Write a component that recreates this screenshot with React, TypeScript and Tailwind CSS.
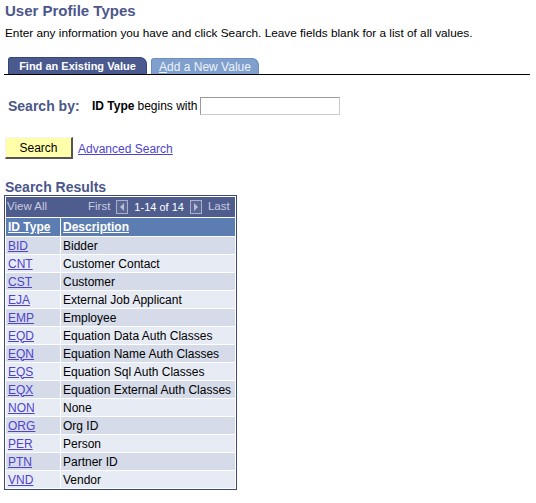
const rows: [string, string][] = [
  ["BID", "Bidder"],
  ["CNT", "Customer Contact"],
  ["CST", "Customer"],
  ["EJA", "External Job Applicant"],
  ["EMP", "Employee"],
  ["EQD", "Equation Data Auth Classes"],
  ["EQN", "Equation Name Auth Classes"],
  ["EQS", "Equation Sql Auth Classes"],
  ["EQX", "Equation External Auth Classes"],
  ["NON", "None"],
  ["ORG", "Org ID"],
  ["PER", "Person"],
  ["PTN", "Partner ID"],
  ["VND", "Vendor"],
];

function NavButton({ dir }: { dir: "left" | "right" }) {
  return (
    <span className="inline-flex h-[14px] w-[12px] shrink-0 items-center justify-center border border-[#a9b0c8] bg-[#5a6796]">
      <svg width="6" height="8" viewBox="0 0 6 8">
        {dir === "left" ? (
          <polygon points="5,0 5,8 1,4" fill="#b8bed3" />
        ) : (
          <polygon points="1,0 1,8 5,4" fill="#b8bed3" />
        )}
      </svg>
    </span>
  );
}

export default function App() {
  return (
    <div className="h-[503px] w-[536px] bg-white font-['Liberation_Sans',Arial,sans-serif] text-black">
      <div className="pl-[5px] pt-[1px] text-[15px] font-bold leading-[20px] text-[#4b568b]">
        User Profile Types
      </div>
      <div className="mt-[5px] pl-[5px] text-[11.8px] leading-[14px]">
        Enter any information you have and click Search. Leave fields blank for a list of all values.
      </div>

      {/* tabs */}
      <div className="ml-[4px] mr-[6px] mt-[17px] flex items-end gap-[4px] border-b border-black pl-[4px]">
        <div className="flex h-[17px] w-[139px] items-center justify-center rounded-tl-[3px] rounded-tr-[7px] border border-b-0 border-[#36447a] bg-[#4a5a8e] text-[11px] font-bold text-white">
          Find an Existing Value
        </div>
        <div className="flex h-[16px] w-[108px] items-center justify-center rounded-tl-[3px] rounded-tr-[7px] border border-b-0 border-[#6d8cbf] bg-[#7f9fcd] text-[12px] text-[#eef2fa]">
          <span>
            <span className="underline">A</span>dd a New Value
          </span>
        </div>
      </div>

      {/* search by */}
      <div className="mt-[22px] flex h-[18px] items-center pl-[8px]">
        <span className="w-[84px] text-[14px] font-bold text-[#4b568b]">Search by:</span>
        <span className="text-[12px] font-bold">ID Type</span>
        <span className="ml-[3px] text-[12px]">begins with</span>
        <input
          className="ml-[2px] h-[18px] w-[140px] border border-t-[#999] border-l-[#999] border-r-[#ccc] border-b-[#ccc] bg-white outline-none"
          type="text"
        />
      </div>

      <div className="mt-[22px] flex items-end pl-[5px]">
        <button className="h-[22px] w-[68px] border border-t-[#f4f4f4] border-l-[#f4f4f4] border-r-[#555] border-b-[#555] border-r-2 border-b-2 bg-[#ffffaa] text-[12px] text-black">
          Search
        </button>
        <a className="mb-[1px] ml-[5px] text-[12px] text-[#4f43cc] underline" href="#">
          Advanced Search
        </a>
      </div>

      <div className="mt-[20px] pl-[5px] text-[14px] font-bold leading-[16px] text-[#4b568b]">
        Search Results
      </div>

      {/* grid */}
      <div className="ml-[4px] w-[233px] border border-[#3b4a7e] bg-white p-px">
        <div className="flex h-[20px] items-center overflow-hidden whitespace-nowrap bg-[#4e5c8e] text-[11.5px] text-[#c9cde0]">
          <span className="w-[82px] shrink-0 pl-[1px]">View All</span>
          <span className="shrink-0">First</span>
          <span className="ml-[6px] flex shrink-0">
            <NavButton dir="left" />
          </span>
          <span className="ml-[6px] shrink-0 text-[11px] text-white">1-14 of 14</span>
          <span className="ml-[6px] flex shrink-0">
            <NavButton dir="right" />
          </span>
          <span className="ml-[6px] shrink-0">Last</span>
        </div>
        <div className="mt-px flex h-[18px] gap-px text-[12px] font-bold text-white">
          <div className="flex w-[54px] items-center bg-[#5b7db1] pl-[2px] underline">ID Type</div>
          <div className="flex flex-1 items-center bg-[#5b7db1] pl-[2px] underline">Description</div>
        </div>
        {rows.map(([id, desc], i) => (
          <div key={id} className="mt-px flex h-[17px] gap-px text-[12px]">
            <div
              className={`flex w-[54px] items-center pl-[2px] ${i % 2 === 0 ? "bg-[#d5dbe8]" : "bg-[#e7ebf4]"}`}
            >
              <a className="text-[#4f43cc] underline" href="#">
                {id}
              </a>
            </div>
            <div
              className={`flex flex-1 items-center pl-[2px] ${i % 2 === 0 ? "bg-[#d5dbe8]" : "bg-[#e7ebf4]"}`}
            >
              {desc}
            </div>
          </div>
        ))}
      </div>
    </div>
  );
}
